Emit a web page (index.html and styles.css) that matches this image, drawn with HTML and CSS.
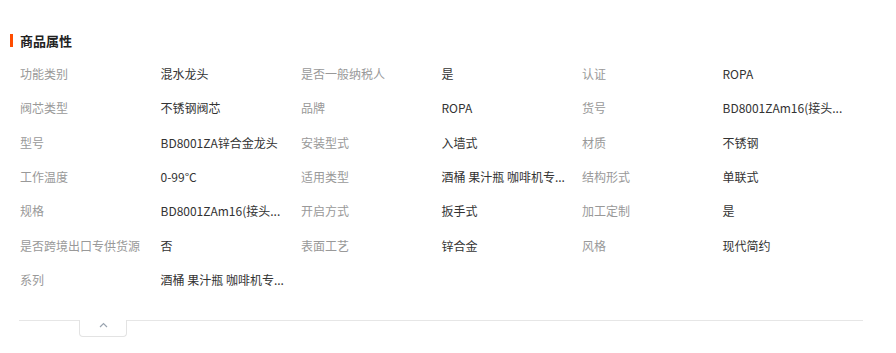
FILE: index.html
```html
<!DOCTYPE html>
<html lang="zh-CN">
<head>
<meta charset="utf-8">
<title>商品属性</title>
<link rel="stylesheet" href="styles.css">
</head>
<body>
<section class="panel">
  <h2 class="panel-title">商品属性</h2>
  <div class="attrs">
    <div class="label">功能类别</div><div class="value">混水龙头</div>
    <div class="label">是否一般纳税人</div><div class="value">是</div>
    <div class="label">认证</div><div class="value">ROPA</div>

    <div class="label">阀芯类型</div><div class="value">不锈钢阀芯</div>
    <div class="label">品牌</div><div class="value">ROPA</div>
    <div class="label">货号</div><div class="value">BD8001ZAm16(接头...</div>

    <div class="label">型号</div><div class="value">BD8001ZA锌合金龙头</div>
    <div class="label">安装型式</div><div class="value">入墙式</div>
    <div class="label">材质</div><div class="value">不锈钢</div>

    <div class="label">工作温度</div><div class="value">0-99°C</div>
    <div class="label">适用类型</div><div class="value">酒桶 果汁瓶 咖啡机专...</div>
    <div class="label">结构形式</div><div class="value">单联式</div>

    <div class="label">规格</div><div class="value">BD8001ZAm16(接头...</div>
    <div class="label">开启方式</div><div class="value">扳手式</div>
    <div class="label">加工定制</div><div class="value">是</div>

    <div class="label">是否跨境出口专供货源</div><div class="value">否</div>
    <div class="label">表面工艺</div><div class="value">锌合金</div>
    <div class="label">风格</div><div class="value">现代简约</div>

    <div class="label">系列</div><div class="value">酒桶 果汁瓶 咖啡机专...</div>
  </div>
  <div class="fold-bar">
    <button class="fold-tab" type="button" aria-label="收起">
      <svg width="9" height="6" viewBox="0 0 9 6"><polyline points="1,5 4.5,1.5 8,5" fill="none" stroke="#9aa4b0" stroke-width="1.2"/></svg>
    </button>
  </div>
</section>
</body>
</html>
```

FILE: styles.css
```css
html, body {
  margin: 0;
  padding: 0;
  background: #fff;
}

body {
  font-family: "Noto Sans CJK SC", "Noto Sans", sans-serif;
  font-size: 12px;
  color: #333;
}

.panel {
  width: 896px;
  padding-top: 32px;
  box-sizing: border-box;
}

.panel-title {
  margin: 2px 0 0 10px;
  padding-left: 7px;
  border-left: 3px solid #ff4d00;
  height: 13px;
  line-height: 13px;
  font-size: 13px;
  font-weight: 700;
  color: #222;
}

.attrs {
  margin: 10px 0 0 20px;
  width: 843px;
  display: grid;
  grid-template-columns: repeat(6, 1fr);
  grid-auto-rows: 34.33px;
  align-items: center;
}

.label {
  color: #999;
  white-space: nowrap;
  line-height: 18px;
}

.value {
  color: #333;
  white-space: nowrap;
  line-height: 18px;
}

.fold-bar {
  margin: 23px 0 0 19px;
  width: 844px;
  border-top: 1px solid #e6e6e6;
  height: 20px;
}

.fold-tab {
  display: flex;
  justify-content: center;
  align-items: flex-start;
  margin: -1px 0 0 60px;
  padding: 2px 0 0;
  width: 48px;
  height: 17px;
  box-sizing: border-box;
  background: #fff;
  border: 1px solid #e3e3e3;
  border-top: none;
  border-radius: 0 0 4px 4px;
  cursor: pointer;
}

.fold-tab svg {
  display: block;
}
```
